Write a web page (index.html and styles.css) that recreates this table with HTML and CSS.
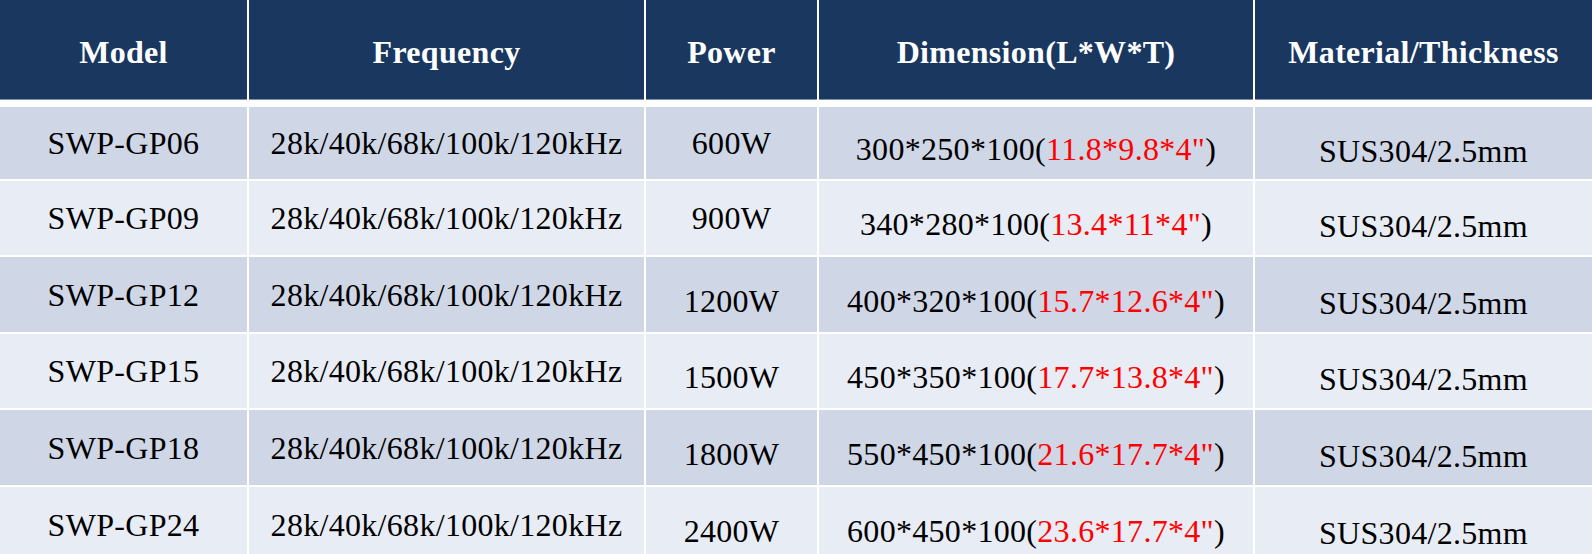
FILE: index.html
```html
<!DOCTYPE html>
<html>
<head>
<meta charset="utf-8">
<link rel="stylesheet" href="styles.css">
</head>
<body>
<div class="spec">
  <div class="grid head">
    <div class="cell">Model</div>
    <div class="cell">Frequency</div>
    <div class="cell">Power</div>
    <div class="cell">Dimension(L*W*T)</div>
    <div class="cell">Material/Thickness</div>
  </div>
  <div class="grid body">
    <div class="cell odd">SWP-GP06</div>
    <div class="cell odd">28k/40k/68k/100k/120kHz</div>
    <div class="cell odd">600W</div>
    <div class="cell odd low">300*250*100(<span class="red">11.8*9.8*4"</span>)</div>
    <div class="cell odd lower">SUS304/2.5mm</div>

    <div class="cell even">SWP-GP09</div>
    <div class="cell even">28k/40k/68k/100k/120kHz</div>
    <div class="cell even">900W</div>
    <div class="cell even low">340*280*100(<span class="red">13.4*11*4"</span>)</div>
    <div class="cell even lower">SUS304/2.5mm</div>

    <div class="cell odd">SWP-GP12</div>
    <div class="cell odd">28k/40k/68k/100k/120kHz</div>
    <div class="cell odd low">1200W</div>
    <div class="cell odd low">400*320*100(<span class="red">15.7*12.6*4"</span>)</div>
    <div class="cell odd lower">SUS304/2.5mm</div>

    <div class="cell even">SWP-GP15</div>
    <div class="cell even">28k/40k/68k/100k/120kHz</div>
    <div class="cell even low">1500W</div>
    <div class="cell even low">450*350*100(<span class="red">17.7*13.8*4"</span>)</div>
    <div class="cell even lower">SUS304/2.5mm</div>

    <div class="cell odd">SWP-GP18</div>
    <div class="cell odd">28k/40k/68k/100k/120kHz</div>
    <div class="cell odd low">1800W</div>
    <div class="cell odd low">550*450*100(<span class="red">21.6*17.7*4"</span>)</div>
    <div class="cell odd lower">SUS304/2.5mm</div>

    <div class="cell even">SWP-GP24</div>
    <div class="cell even">28k/40k/68k/100k/120kHz</div>
    <div class="cell even low">2400W</div>
    <div class="cell even low">600*450*100(<span class="red">23.6*17.7*4"</span>)</div>
    <div class="cell even lower">SUS304/2.5mm</div>
  </div>
</div>
</body>
</html>
```
FILE: styles.css
```css
html, body {
  margin: 0;
  padding: 0;
  background: #ffffff;
}

.spec {
  width: 1592px;
  font-family: "Liberation Serif", "Times New Roman", serif;
  font-size: 32px;
  letter-spacing: 0.3px;
  color: #000000;
}

.grid {
  display: grid;
  grid-template-columns: 247px 395px 171px 434px 337px;
  column-gap: 2px;
  row-gap: 2px;
}

.head {
  height: 100px;
  grid-template-rows: 100px;
}

.head .cell {
  background: #19375f;
  color: #ffffff;
  font-weight: bold;
  padding-top: 4px;
  box-shadow: inset 0 -1px 0 #7d8fad;
}

.body {
  margin-top: 7px;
  grid-template-rows: 72px 74px 75px 74px 75px 75px;
}

.cell {
  display: flex;
  align-items: center;
  justify-content: center;
  white-space: nowrap;
  line-height: 1;
}

.odd {
  background: #cfd6e6;
}

.even {
  background: #e8ecf4;
}

.low {
  padding-top: 12px;
}

.lower {
  padding-top: 16px;
}

.red {
  color: #ff0000;
}
```
